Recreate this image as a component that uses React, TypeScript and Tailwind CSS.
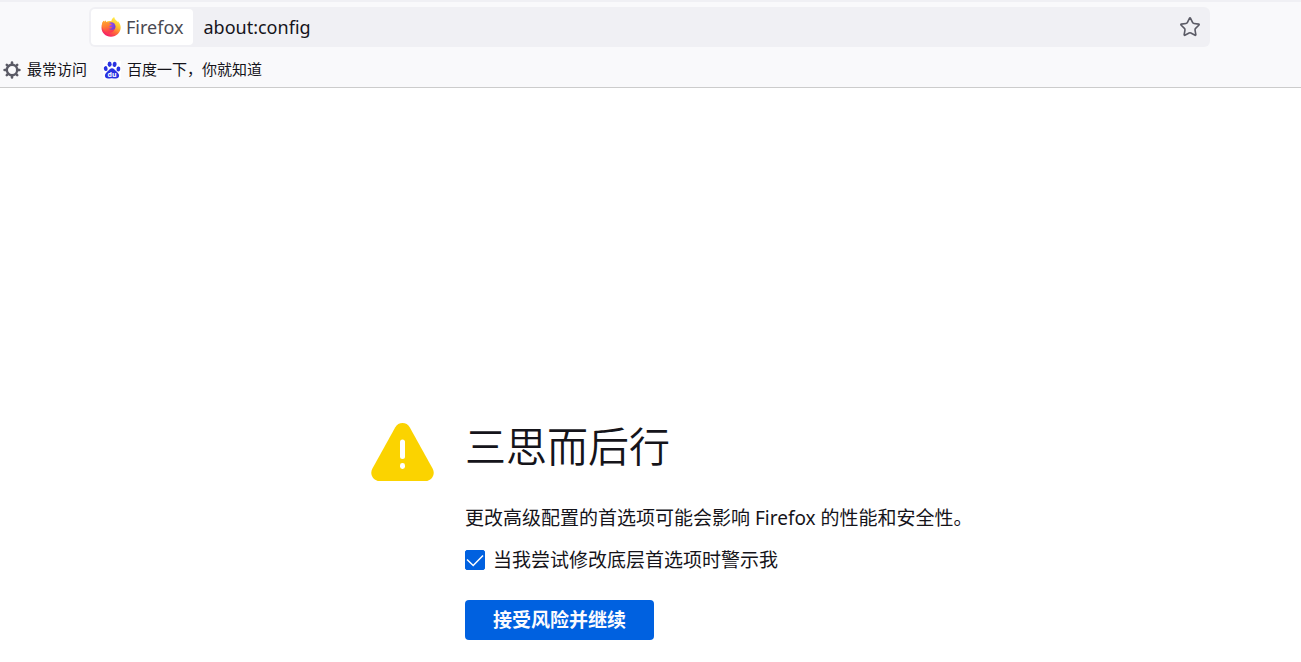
import { Star } from 'lucide-react';
import { useState } from 'react';

function FirefoxLogo() {
  return (
    <svg viewBox="0 0 20 20" className="h-5 w-5 shrink-0" aria-hidden="true">
      <defs>
        <linearGradient id="fx-body" x1="0.8" y1="0.05" x2="0.3" y2="1">
          <stop offset="0" stopColor="#fff44f" />
          <stop offset="0.35" stopColor="#ffc02e" />
          <stop offset="0.65" stopColor="#ff6a3a" />
          <stop offset="1" stopColor="#f5156c" />
        </linearGradient>
        <radialGradient id="fx-globe" cx="0.4" cy="0.3" r="0.8">
          <stop offset="0" stopColor="#a24af0" />
          <stop offset="1" stopColor="#5f3fd0" />
        </radialGradient>
        <linearGradient id="fx-head" x1="0.2" y1="0" x2="0.5" y2="1">
          <stop offset="0" stopColor="#ffa82e" />
          <stop offset="0.5" stopColor="#ff7a33" />
          <stop offset="1" stopColor="#fa3356" />
        </linearGradient>
      </defs>
      <path
        fill="url(#fx-body)"
        d="M13.200 0c.3 1.900 1.400 2.800 2.700 4 .4.400.7.700 1 1.100.2-.2.3-.5.2-.900 1.600 1.700 2.600 4 2.600 6.400 0 5-4.200 9.100-9.700 9.100S.5 15.600.5 10.700c0-2.900.9-5.200 2-6.900l.7 1.400.9-1.600 1.200 1.300c1.300-.8 3.200-1.100 5-.7.2-1.800 1.400-3.500 2.900-4.200Z"
      />
      <circle cx="10.200" cy="9.600" r="4.300" fill="url(#fx-globe)" />
      <path
        fill="url(#fx-head)"
        d="M2.500 3.800l.7 1.400.9-1.600 1.200 1.600c1.500-.1 2.800.4 3.500 1.300l1.500.4c.4.200.2.800-.2 1.100-.7.500-1.700.7-1.800 1.400.5.900 1.900.8 2.800.5-.5 1.500-2 2-3.400 1.700 1.200 1.400 3.700 1.900 5.900.1-.6 2.900-3.600 4.700-6.600 3.900C3 14.500.8 10.800 1 7.400c.2-1.500.8-2.700 1.500-3.600Z"
      />
    </svg>
  );
}

function GearIcon() {
  return (
    <svg viewBox="0 0 18 18" className="h-[18px] w-[18px] shrink-0" fill="none" stroke="#5b5b66" aria-hidden="true">
      <circle cx="9" cy="9" r="5.200" strokeWidth="2.400" />
      <path
        strokeWidth="2.600"
        strokeLinecap="round"
        d="M9 1.600V3M9 15v1.400M1.600 9H3M15 9h1.400M3.800 3.800l1 1M13.200 13.200l1 1M3.800 14.200l1-1M13.200 4.800l1-1"
      />
    </svg>
  );
}

function BaiduLogo() {
  return (
    <svg viewBox="0 0 18 18" className="h-[18px] w-[18px] shrink-0" fill="#2932e1" aria-hidden="true">
      <rect width="18" height="18" fill="#fff" />
      <ellipse cx="6.600" cy="3.300" rx="2" ry="2.700" />
      <ellipse cx="11.600" cy="3.400" rx="2" ry="2.700" transform="rotate(10 11.600 3.400)" />
      <ellipse cx="2.700" cy="7.600" rx="1.900" ry="2.500" transform="rotate(-12 2.700 7.600)" />
      <ellipse cx="15.400" cy="7.900" rx="1.900" ry="2.500" transform="rotate(8 15.400 7.900)" />
      <path d="M9 7.200c1.600 0 2.500 1.200 3.500 2.400 1.200 1.400 3.600 2.600 3.600 5 0 2-1.300 3-3.100 3-1.500 0-2.500-.3-4-.3s-2.400.3-4 .3c-1.900 0-3.100-1.100-3.100-3 0-2.400 2.400-3.600 3.600-5 1-1.200 1.900-2.400 3.500-2.400Z" />
      <text x="9" y="16" fill="#fff" fontSize="7" fontWeight="700" textAnchor="middle">
        du
      </text>
    </svg>
  );
}

function WarningIcon() {
  return (
    <svg viewBox="0 0 63 58" className="h-[58px] w-[63px] shrink-0" aria-hidden="true">
      <path
        fill="#fbd300"
        d="M31.500 0c3 0 5.700 1.500 7.200 4.200l23 41.500c3 5.500-.9 12.300-7.200 12.300h-46c-6.300 0-10.200-6.800-7.200-12.300l23-41.500C25.800 1.500 28.500 0 31.500 0Z"
      />
      <rect x="29" y="16.500" width="5" height="19.500" rx="2.500" fill="#fff" />
      <rect x="29" y="40" width="5" height="6" rx="2.400" fill="#fff" />
    </svg>
  );
}

function Toolbar() {
  const [url, setUrl] = useState('about:config');

  return (
    <header className="border-b border-[#cccccc] bg-[#f9f9fb]">
      <div className="h-0.5 bg-[#f0f0f4]" />
      <div className="mt-[5px] mr-[91px] ml-[89px] flex h-10 items-center rounded-md bg-[#f0f0f4] p-0.5 text-lg text-[#15141a]">
        <button type="button" className="flex h-9 shrink-0 items-center gap-[5px] rounded bg-white px-2.5 text-[#4a4a52]">
          <FirefoxLogo />
          <span>Firefox</span>
        </button>
        <input
          type="text"
          aria-label="地址栏"
          className="h-full min-w-0 flex-1 bg-transparent px-2.5 outline-none"
          value={url}
          onChange={(e) => setUrl(e.target.value)}
        />
        <button type="button" aria-label="为此页添加书签" className="flex h-9 w-9 shrink-0 items-center justify-center">
          <Star className="h-[22px] w-[22px] text-[#5b5b66]" strokeWidth={1.75} aria-hidden="true" />
        </button>
      </div>
      <nav className="flex h-10 items-center gap-4 px-[3px] pt-[5px] text-[15px] text-[#15141a]">
        <a href="#most-visited" className="flex items-center gap-1.5">
          <GearIcon />
          <span>最常访问</span>
        </a>
        <a href="#baidu" className="flex items-center gap-1.5">
          <BaiduLogo />
          <span>百度一下，你就知道</span>
        </a>
      </nav>
    </header>
  );
}

function ConfigWarning() {
  const [warn, setWarn] = useState(true);

  return (
    <main className="flex justify-center pt-[335px] pb-5 pl-11">
      <div className="flex w-full max-w-[603px] items-start gap-[31px]">
        <WarningIcon />
        <div className="min-w-0 flex-1">
          <h1 className="text-[41px] leading-[46px] font-[350]">三思而后行</h1>
          <p className="mt-[33px] text-[19px] leading-8">更改高级配置的首选项可能会影响 Firefox 的性能和安全性。</p>
          <label className="mt-3 flex items-center gap-2 text-[19px] leading-7">
            <span className="relative flex h-5 w-5 shrink-0">
              <input
                type="checkbox"
                className="h-5 w-5 appearance-none rounded-xs border border-[#8f8f9d] bg-white checked:border-[#0061e0] checked:bg-[#0061e0]"
                checked={warn}
                onChange={(e) => setWarn(e.target.checked)}
              />
              {warn ? (
                <svg viewBox="0 0 20 20" className="pointer-events-none absolute inset-0" fill="none" aria-hidden="true">
                  <path d="M2 9.500l6.200 6L18 5.500" stroke="#fff" strokeWidth="1.500" />
                </svg>
              ) : null}
            </span>
            <span>当我尝试修改底层首选项时警示我</span>
          </label>
          <button
            type="button"
            className="mt-[26px] h-10 rounded bg-[#0061e0] px-7 text-[19px] font-bold text-[#fbfbfe]"
          >
            接受风险并继续
          </button>
        </div>
      </div>
    </main>
  );
}

export default function App() {
  return (
    <div className="min-h-screen bg-white font-['Noto_Sans','Noto_Sans_CJK_SC',sans-serif] text-[#15141a]">
      <Toolbar />
      <ConfigWarning />
    </div>
  );
}
